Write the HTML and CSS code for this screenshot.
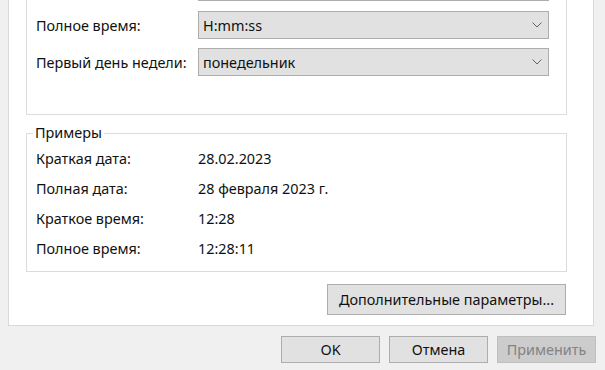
FILE: index.html
```html
<!DOCTYPE html>
<html lang="ru">
<head>
  <meta charset="UTF-8">
  <title>Настройка формата</title>
  <link rel="stylesheet" href="styles.css">
</head>
<body>
  <div class="window">
    <div class="sheet">
      <!-- Date/time formats (top part scrolled off) -->
      <div class="group group-format">
        <div class="combo-edge"></div>
        <div class="field-row">
          <span class="field-label">Полное время:</span>
          <div class="combo">
            <span class="combo-value">H:mm:ss</span>
            <svg class="combo-arrow" width="10" height="6" viewBox="0 0 10 6"><path d="M0.5 0.5 L5 5 L9.5 0.5" fill="none" stroke="#666" stroke-width="1"/></svg>
          </div>
        </div>
        <div class="field-row">
          <span class="field-label">Первый день недели:</span>
          <div class="combo">
            <span class="combo-value">понедельник</span>
            <svg class="combo-arrow" width="10" height="6" viewBox="0 0 10 6"><path d="M0.5 0.5 L5 5 L9.5 0.5" fill="none" stroke="#666" stroke-width="1"/></svg>
          </div>
        </div>
      </div>

      <!-- Examples -->
      <div class="group group-examples">
        <span class="group-title">Примеры</span>
        <div class="sample-row"><span class="sample-label">Краткая дата:</span><span>28.02.2023</span></div>
        <div class="sample-row"><span class="sample-label">Полная дата:</span><span>28 февраля 2023 г.</span></div>
        <div class="sample-row"><span class="sample-label">Краткое время:</span><span>12:28</span></div>
        <div class="sample-row"><span class="sample-label">Полное время:</span><span>12:28:11</span></div>
      </div>

      <div class="sheet-actions">
        <button class="btn btn-wide">Дополнительные параметры...</button>
      </div>
    </div>

    <div class="dialog-actions">
      <button class="btn">OK</button>
      <button class="btn">Отмена</button>
      <button class="btn" disabled>Применить</button>
    </div>
  </div>
</body>
</html>
```

FILE: styles.css
```css
/* General */
* {
  box-sizing: border-box;
}

body {
  margin: 0;
  background: #f0f0f0;
  font-family: 'Noto Sans', 'Open Sans', sans-serif;
  font-size: 14.4px;
  color: #111;
}

.window {
  width: 605px;
  height: 370px;
  overflow: hidden;
}

/* White tab sheet */
.sheet {
  margin-left: 8px;
  width: 586px;
  background: #fff;
  border: 1px solid #d9d9d9;
  border-top: none;
  padding: 0 27px 10px 17px;
}

.group {
  width: 541px;
  border: 1px solid #dcdcdc;
  padding-left: 9px;
}

/* Format group */
.group-format {
  border-top: none;
  padding-bottom: 38px;
}

.combo-edge {
  margin-left: 162px;
  width: 351px;
  height: 1px;
  background: #adadad;
  margin-bottom: 10px;
}

.field-row {
  display: flex;
  align-items: center;
  height: 28px;
  margin-bottom: 9px;
}

.field-row:last-child {
  margin-bottom: 0;
}

.field-label {
  width: 162px;
}

.combo {
  width: 351px;
  height: 28px;
  display: flex;
  align-items: center;
  justify-content: space-between;
  background: #e1e1e1;
  border: 1px solid #adadad;
  padding: 0 6px 0 4px;
}

/* Examples group */
.group-examples {
  position: relative;
  margin-top: 18px;
  padding-top: 9px;
  padding-bottom: 8px;
}

.group-title {
  position: absolute;
  left: 6px;
  top: -11px;
  line-height: 20px;
  padding: 0 2px;
  background: #fff;
}

.sample-row {
  display: flex;
  align-items: center;
  height: 30px;
}

.sample-label {
  width: 162px;
}

.sheet-actions {
  display: flex;
  justify-content: flex-end;
  margin-top: 12px;
}

/* Buttons */
.btn {
  font-family: inherit;
  font-size: 14.4px;
  color: #111;
  background: #e1e1e1;
  border: 1px solid #adadad;
  width: 99px;
  height: 27px;
  padding: 0;
}

.btn-wide {
  width: 239px;
  height: 31px;
}

.btn:disabled {
  background: #cccccc;
  border-color: #bfbfbf;
  color: #838383;
}

.dialog-actions {
  display: flex;
  justify-content: flex-end;
  gap: 9px;
  margin-top: 10px;
  padding-right: 9px;
}
```
